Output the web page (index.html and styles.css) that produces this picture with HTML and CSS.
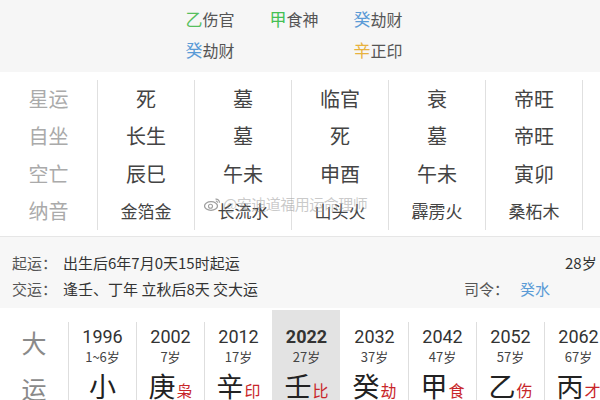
FILE: index.html
```html
<!DOCTYPE html>
<html lang="zh">
<head>
<meta charset="utf-8">
<link rel="stylesheet" href="styles.css">
</head>
<body>
<div class="page">
  <section class="hidden">
    <div class="hrow">
      <span class="hs"><b class="wood">乙</b>伤官</span>
      <span class="hs"><b class="wood2">甲</b>食神</span>
      <span class="hs"><b class="water">癸</b>劫财</span>
    </div>
    <div class="hrow">
      <span class="hs"><b class="water">癸</b>劫财</span>
      <span class="hs"></span>
      <span class="hs"><b class="metal">辛</b>正印</span>
    </div>
  </section>

  <section class="table">
    <div class="col labels">
      <div class="cell">星运</div>
      <div class="cell">自坐</div>
      <div class="cell">空亡</div>
      <div class="cell">纳音</div>
    </div>
    <div class="col">
      <div class="cell">死</div>
      <div class="cell">长生</div>
      <div class="cell">辰巳</div>
      <div class="cell small">金箔金</div>
    </div>
    <div class="col">
      <div class="cell">墓</div>
      <div class="cell">墓</div>
      <div class="cell">午未</div>
      <div class="cell small">长流水</div>
    </div>
    <div class="col">
      <div class="cell">临官</div>
      <div class="cell">死</div>
      <div class="cell">申酉</div>
      <div class="cell small">山头火</div>
    </div>
    <div class="col">
      <div class="cell">衰</div>
      <div class="cell">墓</div>
      <div class="cell">午未</div>
      <div class="cell small">霹雳火</div>
    </div>
    <div class="col">
      <div class="cell">帝旺</div>
      <div class="cell">帝旺</div>
      <div class="cell">寅卯</div>
      <div class="cell small">桑柘木</div>
    </div>
    <div class="col last"></div>
    <div class="watermark">
      <svg width="17" height="14" viewBox="0 0 17 14" aria-hidden="true">
        <ellipse cx="7" cy="9" rx="6.5" ry="4.3" fill="none" stroke="#a0a0a0" stroke-width="1.3"/>
        <circle cx="6.5" cy="9.3" r="2" fill="none" stroke="#a0a0a0" stroke-width="1.1"/>
        <path d="M11.5 2.2a3.5 3.5 0 0 1 4 3.6" fill="none" stroke="#a0a0a0" stroke-width="1.2"/>
        <path d="M11.8 4.2a1.5 1.5 0 0 1 1.8 1.6" fill="none" stroke="#a0a0a0" stroke-width="1.1"/>
      </svg>
      <span>@安迪道福用运命理师</span>
    </div>
  </section>

  <section class="info">
    <div class="info-left">
      <div class="line"><span class="lab">起运：</span>出生后6年7月0天15时起运</div>
      <div class="line"><span class="lab">交运：</span>逢壬、丁年 立秋后8天 交大运</div>
    </div>
    <div class="info-right">
      <div class="line age">28岁</div>
      <div class="line"><span class="lab wide">司令：</span><span class="water">癸水</span></div>
    </div>
  </section>

  <section class="dayun">
    <div class="dy-label">
      <span>大</span>
      <span>运</span>
    </div>
    <div class="dy">
      <div class="yr">1996</div>
      <div class="ag">1~6岁</div>
      <div class="gz">小</div>
    </div>
    <div class="dy">
      <div class="yr">2002</div>
      <div class="ag">7岁</div>
      <div class="gz">庚<i>枭</i></div>
    </div>
    <div class="dy">
      <div class="yr">2012</div>
      <div class="ag">17岁</div>
      <div class="gz">辛<i>印</i></div>
    </div>
    <div class="dy cur">
      <div class="yr">2022</div>
      <div class="ag">27岁</div>
      <div class="gz">壬<i>比</i></div>
    </div>
    <div class="dy nob">
      <div class="yr">2032</div>
      <div class="ag">37岁</div>
      <div class="gz">癸<i>劫</i></div>
    </div>
    <div class="dy">
      <div class="yr">2042</div>
      <div class="ag">47岁</div>
      <div class="gz">甲<i>食</i></div>
    </div>
    <div class="dy">
      <div class="yr">2052</div>
      <div class="ag">57岁</div>
      <div class="gz">乙<i>伤</i></div>
    </div>
    <div class="dy">
      <div class="yr">2062</div>
      <div class="ag">67岁</div>
      <div class="gz">丙<i>才</i></div>
    </div>
  </section>
</div>
</body>
</html>
```

FILE: styles.css
```css
html, body {
  margin: 0;
  padding: 0;
}
body {
  width: 600px;
  height: 400px;
  overflow: hidden;
  background: #ffffff;
  font-family: "Noto Sans CJK SC", "Noto Sans", sans-serif;
  color: #444;
}
.page {
  width: 600px;
  height: 400px;
  overflow: hidden;
}

/* hidden stems */
.hidden {
  height: 72px;
  background: #f6f6f6;
  padding-top: 3px;
  box-sizing: border-box;
}
.hrow {
  display: grid;
  grid-template-columns: repeat(3, 84px);
  padding-left: 168px;
  height: 31px;
  align-items: center;
}
.hs {
  justify-self: center;
  font-size: 16px;
  color: #555;
  line-height: 20px;
  white-space: nowrap;
}
.hs b {
  font-weight: normal;
  font-size: 17px;
}
.wood { color: #57bf5e; }
.wood2 { color: #45c053; }
.water { color: #5a9bd6; }
.metal { color: #e8b23e; }

/* table */
.table {
  position: relative;
  display: flex;
  height: 164px;
  padding-top: 8px;
  box-sizing: border-box;
  background: #fff;
}
.col {
  width: 97px;
  flex: none;
  display: flex;
  flex-direction: column;
  height: 150px;
  border-left: 1px solid #e0e0e0;
  box-sizing: border-box;
}
.col.labels {
  border-left: none;
  color: #aaa;
}
.col.last {
  width: 30px;
}
.cell {
  height: 38px;
  display: flex;
  align-items: center;
  justify-content: center;
  font-size: 20px;
  line-height: 24px;
}
.cell.small {
  font-size: 17px;
}
.watermark {
  position: absolute;
  left: 204px;
  top: 123px;
  display: flex;
  align-items: center;
  gap: 2px;
  font-size: 15px;
  line-height: 18px;
  color: rgba(150, 150, 150, 0.5);
  letter-spacing: -0.5px;
}

/* info */
.info {
  display: flex;
  justify-content: space-between;
  height: 72px;
  background: #f7f7f7;
  border-top: 1px solid #e6e6e6;
  padding: 13px 0 0 12px;
  box-sizing: border-box;
  font-size: 15px;
  color: #333;
}
.line {
  height: 26px;
  line-height: 26px;
  white-space: nowrap;
}
.lab {
  color: #555;
  margin-right: 6px;
}
.lab.wide {
  margin-right: 11px;
}
.info-right {
  width: 136px;
  flex: none;
}
.age {
  padding-left: 101px;
}

/* dayun */
.dayun {
  display: flex;
  height: 92px;
  background: #fff;
  padding-top: 2px;
  box-sizing: border-box;
}
.dy-label {
  width: 68px;
  flex: none;
  display: flex;
  flex-direction: column;
  align-items: center;
  padding-top: 17px;
  box-sizing: border-box;
  font-size: 25px;
  line-height: 30px;
  color: #8a8a8a;
  gap: 16px;
}
.dy-label span {
  display: block;
}
.dy {
  width: 68px;
  flex: none;
  margin-top: 12px;
  padding-top: 4px;
  border-left: 1px solid #dedede;
  box-sizing: border-box;
  text-align: center;
  color: #333;
}
.dy.cur {
  margin-top: 0;
  padding-top: 16px;
  background: #e3e3e3;
  border-left-color: #e3e3e3;
}
.dy.cur .yr {
  font-weight: bold;
}
.dy.nob {
  border-left-color: transparent;
}
.yr {
  font-size: 18px;
  line-height: 22px;
  font-family: Roboto, "Noto Sans CJK SC", sans-serif;
}
.ag {
  font-size: 13px;
  line-height: 18px;
  color: #444;
}
.gz {
  font-size: 27px;
  line-height: 40px;
  white-space: nowrap;
  color: #222;
}
.gz i {
  font-style: normal;
  font-size: 16px;
  color: #c8262a;
  margin-left: 1px;
}
```
